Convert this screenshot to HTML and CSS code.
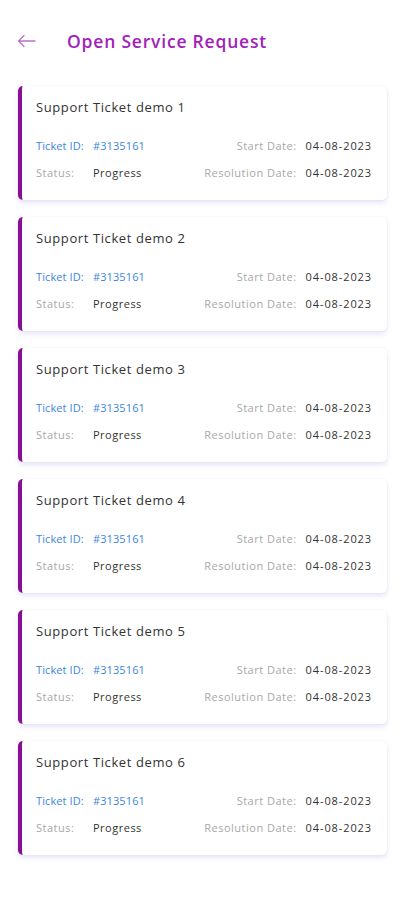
FILE: index.html
```html
<!DOCTYPE html>
<html>
<head>
<meta charset="utf-8">
<link rel="stylesheet" href="styles.css">
</head>
<body>
<div class="page">
  <header class="header">
    <svg class="back" width="19" height="14" viewBox="0 0 19 14"><path d="M18 7H1.5M7 1.5L1.5 7 7 12.5" fill="none" stroke="#b872c8" stroke-width="1.3" stroke-linecap="round" stroke-linejoin="round"/></svg>
    <h1 class="title">Open Service Request</h1>
  </header>
  <main class="list" id="list"></main>
</div>
<script src="app.js"></script>
</body>
</html>
```
FILE: app.js
```js
const list = document.getElementById('list');
for (let i = 1; i <= 6; i++) {
  const card = document.createElement('div');
  card.className = 'card';
  card.innerHTML = `
    <div class="card-title">Support Ticket demo ${i}</div>
    <div class="grid">
      <span class="lbl blue">Ticket ID:</span><span class="val blue">#3135161</span>
      <span class="lbl right">Start Date:</span><span class="val date">04-08-2023</span>
      <span class="lbl">Status:</span><span class="val">Progress</span>
      <span class="lbl right">Resolution Date:</span><span class="val date">04-08-2023</span>
    </div>`;
  list.appendChild(card);
}
```
FILE: styles.css
```css
* { box-sizing: border-box; }
html, body { margin: 0; padding: 0; background: #fff; }
body { font-family: "Open Sans", "Noto Sans", sans-serif; color: #333; }
.page { width: 404px; min-height: 900px; }
.header { display: flex; align-items: center; height: 42px; margin-top: 20px; padding-left: 17px; }
.back { display: block; }
.title { margin: 0 0 0 31px; font-size: 17.5px; font-weight: 600; color: #a122b8; letter-spacing: 0.8px; }
.list { display: flex; flex-direction: column; gap: 17px; padding: 24px 17px 0 18px; }
.card { background: #fff; border-left: 4px solid #8a0d96; border-radius: 5px; box-shadow: 0 3px 5px rgba(110, 95, 210, 0.16), 0 0 2px rgba(0,0,0,0.06); padding: 12px 15px 12px 14px; height: 114px; }
.card-title { font-size: 13px; line-height: 18px; color: #333; letter-spacing: 0.6px; }
.grid { display: grid; grid-template-columns: 57px 1fr auto auto; column-gap: 0; row-gap: 9px; margin-top: 21px; font-size: 11px; line-height: 18px; letter-spacing: 0.5px; }
.lbl { color: #a8a8a8; }
.right { text-align: right; padding-right: 9px; }
.val { color: #333; }
.date { letter-spacing: 0.9px; }
.blue { color: #3b86e0; letter-spacing: 0.1px; }
```
